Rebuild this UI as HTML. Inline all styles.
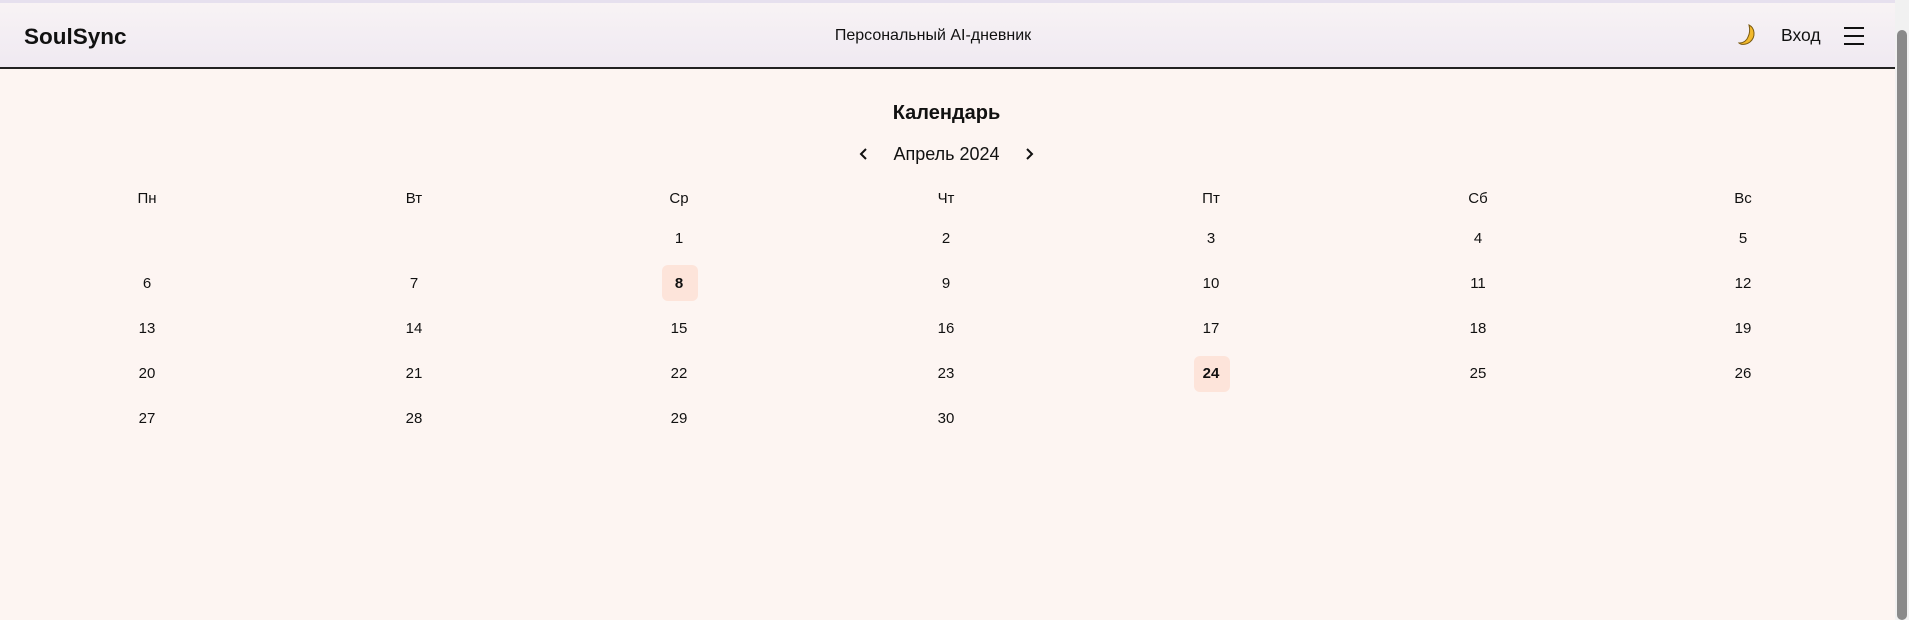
<!DOCTYPE html>
<html><head><meta charset="utf-8"><style>
*{margin:0;padding:0;box-sizing:border-box}
body{width:1909px;height:620px;overflow:hidden;background:#fdf5f2;font-family:"Liberation Sans",sans-serif;color:#111;position:relative}
.top{position:absolute;left:0;top:0;width:1895px;height:3px;background:#e6e0ee}
header{position:absolute;left:0;top:3px;width:1895px;height:66px;background:linear-gradient(180deg,#f8f3f4,#efe9f2);border-bottom:2px solid #222}
.logo{position:absolute;left:24px;top:21px;font-size:22.5px;font-weight:bold}
.mid{position:absolute;left:0;width:1866px;top:24px;text-align:center;font-size:16px}
.vh{position:absolute;left:1781px;top:22px;font-size:17.5px}
.burger{position:absolute;left:1844px;top:24px;width:20px}
.burger i{display:block;height:2px;background:#111;margin-bottom:6px}
.sb{position:absolute;left:1895px;top:0;width:14px;height:620px;background:#f1f1f1}
.sb i{position:absolute;left:2px;top:30px;width:10px;height:590px;background:#8a8a8a;border-radius:5px}
h1{position:absolute;left:0;width:1893px;top:102px;text-align:center;font-size:20px}
.nav{position:absolute;left:0;width:1893px;top:144px;text-align:center;font-size:18px}
.nav svg{vertical-align:-1px}
.c{position:absolute;width:60px;margin-left:-30px;text-align:center;font-size:15px}
.hl{position:absolute;width:36px;height:36px;margin-left:-18px;background:#fde4da;border-radius:6px}
</style></head><body>
<div class="top"></div>
<header>
<div class="logo">SoulSync</div>
<div class="mid">Персональный AI-дневник</div>
<svg style="position:absolute;left:1737px;top:20px" width="24" height="26" viewBox="0 0 24 26"><path d="M12 2c6 3 7 12 1 17-4 3-9 3-11 1 5 0 8-3 9-6 2-4 2-8 1-12z" fill="#f2b92c" stroke="#7a5a10" stroke-width="1"/></svg>
<div class="vh">Вход</div>
<div class="burger"><i></i><i></i><i></i></div>
</header>
<div class="sb"><i></i></div>
<h1>Календарь</h1>
<div class="nav"><svg width="10" height="14" viewBox="0 0 10 14" style="margin-right:24px"><path d="M7 2L2 7l5 5" fill="none" stroke="#111" stroke-width="2"/></svg>Апрель 2024<svg width="10" height="14" viewBox="0 0 10 14" style="margin-left:24px"><path d="M3 2l5 5-5 5" fill="none" stroke="#111" stroke-width="2"/></svg></div>
<div class="hl" style="left:680px;top:265px"></div>
<div class="hl" style="left:1212px;top:356px"></div>
<div id="g"></div>
<script>
var xs=[147,414,679,946,1211,1478,1743],d=["Пн","Вт","Ср","Чт","Пт","Сб","Вс"],h="";
for(var i=0;i<7;i++)h+='<div class="c" style="left:'+xs[i]+'px;top:190px">'+d[i]+'</div>';
var ys=[230,275,320,365,410];
for(var n=1;n<=30;n++){var p=n+1,r=Math.floor(p/7),c=p%7;var b=(n==8||n==24)?'font-weight:bold;':'';
h+='<div class="c" style="'+b+'left:'+xs[c]+'px;top:'+(ys[r])+'px">'+n+'</div>';}
document.getElementById('g').innerHTML=h;
</script>
</body></html>
